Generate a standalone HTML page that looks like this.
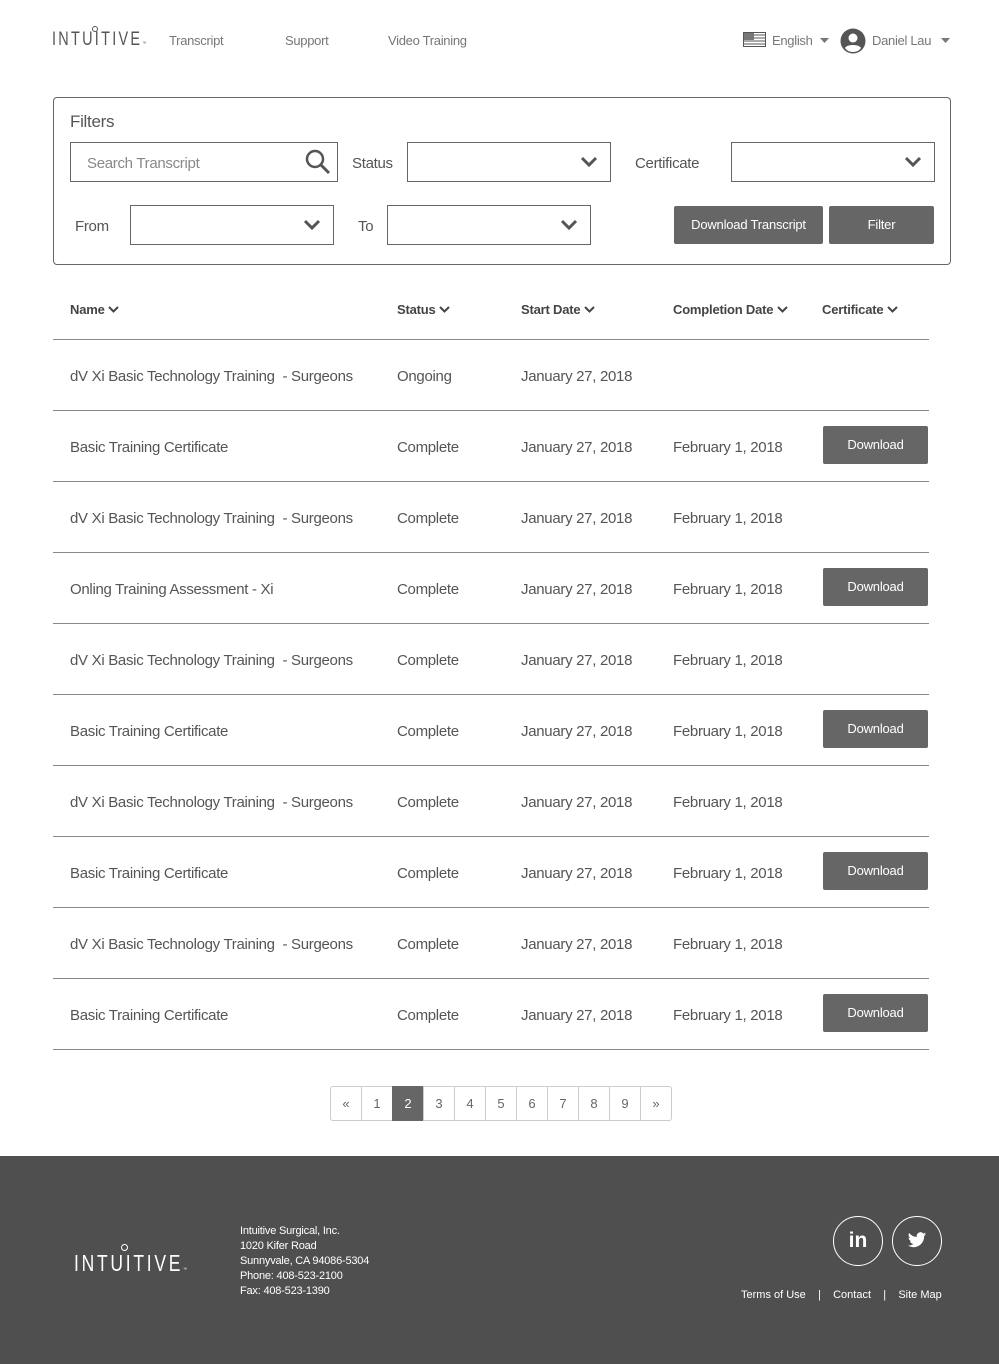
<!DOCTYPE html>
<html><head><meta charset="utf-8"><style>
*{box-sizing:border-box;margin:0;padding:0}
body{width:999px;height:1364px;position:relative;background:#fff;font-family:"Liberation Sans",sans-serif;color:#555;overflow:hidden}
.a{position:absolute;white-space:nowrap}
.t{font-size:14px;letter-spacing:-0.3px;line-height:18px}
.box{position:absolute;border:1px solid #666;background:#fff}
.chev{position:absolute;right:12px;top:13px}
.btn{position:absolute;background:#666;color:#fff;border-radius:2px;font-size:13px;text-align:center;letter-spacing:-0.2px}
.line{position:absolute;left:53px;width:876px;height:1px;background:#888}
.hd{font-weight:bold;font-size:13px;color:#444;letter-spacing:-0.2px}
.pg{position:absolute;top:1086px;height:35px;border:1px solid #ccc;font-size:13px;text-align:center;line-height:33px;color:#666;background:#fff}
.f{color:#fff;font-size:11px;line-height:15px;letter-spacing:-0.2px}
.logo{transform-origin:0 0;transform:scaleX(0.76)}
</style></head><body>
<!-- header -->
<div class="a logo" style="left:52px;top:30px;font-size:19px;letter-spacing:3px;color:#555;line-height:20px">INTUITIVE<span style="font-size:5px;letter-spacing:0">™</span></div>
<div class="a" style="left:92px;top:26px;width:6px;height:6px;border:1.2px solid #555;border-radius:50%"></div>
<div class="a t" style="left:169px;top:32px;color:#777;font-size:13px">Transcript</div>
<div class="a t" style="left:285px;top:32px;color:#777;font-size:13px">Support</div>
<div class="a t" style="left:388px;top:32px;color:#777;font-size:13px">Video Training</div>
<svg class="a" style="left:743px;top:32px" width="23" height="15"><rect x="0.5" y="0.5" width="22" height="14" fill="#fff" stroke="#555"/><g stroke="#555"><line x1="0" y1="3" x2="23" y2="3"/><line x1="0" y1="6" x2="23" y2="6"/><line x1="0" y1="9" x2="23" y2="9"/><line x1="0" y1="12" x2="23" y2="12"/></g><rect x="1" y="1" width="10" height="7" fill="#777"/></svg>
<div class="a t" style="left:772px;top:32px;color:#777;font-size:13px">English</div>
<svg class="a" style="left:820px;top:38px" width="9" height="5"><path d="M0 0h9L4.5 5z" fill="#777"/></svg>
<svg class="a" style="left:840px;top:28px" width="26" height="26"><circle cx="13" cy="13" r="12.5" fill="#555"/><circle cx="13" cy="10" r="4.5" fill="#fff"/><path d="M5 20c2-4 14-4 16 0c-2 3-5 4-8 4s-6-1-8-4z" fill="#fff"/></svg>
<div class="a t" style="left:872px;top:32px;color:#777;font-size:13px">Daniel Lau</div>
<svg class="a" style="left:941px;top:38px" width="9" height="5"><path d="M0 0h9L4.5 5z" fill="#777"/></svg>
<!-- filters -->
<div class="a" style="left:53px;top:97px;width:898px;height:168px;border:1px solid #666;border-radius:4px"></div>
<div class="a" style="left:70px;top:112px;font-size:17px;color:#555;letter-spacing:-0.3px">Filters</div>
<div class="box" style="left:70px;top:142px;width:268px;height:40px"></div>
<div class="a t" style="left:87px;top:155px;color:#888;font-size:15px">Search Transcript</div>
<svg class="a" style="left:305px;top:149px" width="26" height="27"><circle cx="10" cy="10" r="8" fill="none" stroke="#555" stroke-width="2.5"/><line x1="16" y1="16" x2="24" y2="24" stroke="#555" stroke-width="3"/></svg>
<div class="a t" style="left:352px;top:155px;font-size:15px">Status</div>
<div class="box" style="left:407px;top:142px;width:204px;height:40px"><svg class="chev" width="18" height="12"><path d="M2 2l7 7 7-7" fill="none" stroke="#555" stroke-width="3"/></svg></div>
<div class="a t" style="left:635px;top:155px;font-size:15px">Certificate</div>
<div class="box" style="left:731px;top:142px;width:204px;height:40px"><svg class="chev" width="18" height="12"><path d="M2 2l7 7 7-7" fill="none" stroke="#555" stroke-width="3"/></svg></div>
<div class="a t" style="left:75px;top:218px;font-size:15px">From</div>
<div class="box" style="left:130px;top:205px;width:204px;height:40px"><svg class="chev" width="18" height="12"><path d="M2 2l7 7 7-7" fill="none" stroke="#555" stroke-width="3"/></svg></div>
<div class="a t" style="left:358px;top:218px;font-size:15px">To</div>
<div class="box" style="left:387px;top:205px;width:204px;height:40px"><svg class="chev" width="18" height="12"><path d="M2 2l7 7 7-7" fill="none" stroke="#555" stroke-width="3"/></svg></div>
<div class="btn" style="left:674px;top:206px;width:149px;height:38px;line-height:38px">Download Transcript</div>
<div class="btn" style="left:829px;top:206px;width:105px;height:38px;line-height:38px">Filter</div>
<!-- table header -->
<div class="a hd" style="left:70px;top:302px">Name <svg width="11" height="8"><path d="M1 1l4.5 4.5L10 1" fill="none" stroke="#444" stroke-width="2"/></svg></div>
<div class="a hd" style="left:397px;top:302px">Status <svg width="11" height="8"><path d="M1 1l4.5 4.5L10 1" fill="none" stroke="#444" stroke-width="2"/></svg></div>
<div class="a hd" style="left:521px;top:302px">Start Date <svg width="11" height="8"><path d="M1 1l4.5 4.5L10 1" fill="none" stroke="#444" stroke-width="2"/></svg></div>
<div class="a hd" style="left:673px;top:302px">Completion Date <svg width="11" height="8"><path d="M1 1l4.5 4.5L10 1" fill="none" stroke="#444" stroke-width="2"/></svg></div>
<div class="a hd" style="left:822px;top:302px">Certificate <svg width="11" height="8"><path d="M1 1l4.5 4.5L10 1" fill="none" stroke="#444" stroke-width="2"/></svg></div>
<div class="line" style="top:339px"></div>
<div id="rows"></div>
<script>
var names=["dV Xi Basic Technology Training &nbsp;- Surgeons","Basic Training Certificate","dV Xi Basic Technology Training &nbsp;- Surgeons","Onling Training Assessment - Xi","dV Xi Basic Technology Training &nbsp;- Surgeons","Basic Training Certificate","dV Xi Basic Technology Training &nbsp;- Surgeons","Basic Training Certificate","dV Xi Basic Technology Training &nbsp;- Surgeons","Basic Training Certificate"];
var dl=[0,1,0,1,0,1,0,1,0,1],h="";
for(var i=0;i<10;i++){var y=339+i*71,ty=y+29;
h+='<div class="a t" style="left:70px;top:'+ty+'px;font-size:15px">'+names[i]+'</div>';
h+='<div class="a t" style="left:397px;top:'+ty+'px;font-size:15px">'+(i==0?'Ongoing':'Complete')+'</div>';
h+='<div class="a t" style="left:521px;top:'+ty+'px;font-size:15px">January 27, 2018</div>';
if(i>0)h+='<div class="a t" style="left:673px;top:'+ty+'px;font-size:15px">February 1, 2018</div>';
if(dl[i])h+='<div class="btn" style="left:823px;top:'+(y+16)+'px;width:105px;height:38px;line-height:38px">Download</div>';
h+='<div class="line" style="top:'+(y+71)+'px"></div>';}
document.getElementById('rows').innerHTML=h;
</script>
<!-- pagination -->
<div class="pg" style="left:330px;width:32px;border-radius:3px 0 0 3px">«</div>
<div class="pg" style="left:361px;width:32px">1</div>
<div class="pg" style="left:392px;width:32px;background:#666;color:#fff;border-color:#666">2</div>
<div class="pg" style="left:423px;width:32px">3</div>
<div class="pg" style="left:454px;width:32px">4</div>
<div class="pg" style="left:485px;width:32px">5</div>
<div class="pg" style="left:516px;width:32px">6</div>
<div class="pg" style="left:547px;width:32px">7</div>
<div class="pg" style="left:578px;width:32px">8</div>
<div class="pg" style="left:609px;width:32px">9</div>
<div class="pg" style="left:640px;width:32px;border-radius:0 3px 3px 0">»</div>
<!-- footer -->
<div class="a" style="left:0;top:1156px;width:999px;height:208px;background:#4f4f4f"></div>
<div class="a logo" style="left:74px;top:1251px;font-size:23px;letter-spacing:3.6px;color:#fff;line-height:24px">INTUITIVE<span style="font-size:5px;letter-spacing:0">™</span></div>
<div class="a" style="left:121px;top:1244px;width:7px;height:7px;border:1.3px solid #fff;border-radius:50%"></div>
<div class="a f" style="left:240px;top:1224px">Intuitive Surgical, Inc.<br>1020 Kifer Road<br>Sunnyvale, CA 94086-5304<br>Phone: 408-523-2100<br>Fax: 408-523-1390</div>
<div class="a" style="left:833px;top:1216px;width:50px;height:50px;border:1.5px solid #fff;border-radius:50%;color:#fff;font-weight:bold;font-size:21px;text-align:center;line-height:48px">in</div>
<div class="a" style="left:892px;top:1216px;width:50px;height:50px;border:1.5px solid #fff;border-radius:50%"></div>
<svg class="a" style="left:907px;top:1232px" width="20" height="17" viewBox="0 0 24 20"><path d="M23 2.3c-.8.4-1.7.6-2.6.7.9-.6 1.6-1.4 2-2.5-.9.5-1.9.9-2.9 1.1A4.5 4.5 0 0 0 11.8 5.7 12.8 12.8 0 0 1 2.5 1 4.5 4.5 0 0 0 3.9 7a4.5 4.5 0 0 1-2-.6c0 2.2 1.5 4 3.6 4.4a4.5 4.5 0 0 1-2 .1 4.5 4.5 0 0 0 4.2 3.1A9 9 0 0 1 1 16a12.7 12.7 0 0 0 19.6-11.3c.9-.6 1.6-1.4 2.3-2.3z" fill="#fff"/></svg>
<div class="a f" style="left:741px;top:1288px;letter-spacing:0">Terms of Use &nbsp;&nbsp;&nbsp;| &nbsp;&nbsp;&nbsp;Contact &nbsp;&nbsp;&nbsp;| &nbsp;&nbsp;&nbsp;Site Map</div>
</body></html>
